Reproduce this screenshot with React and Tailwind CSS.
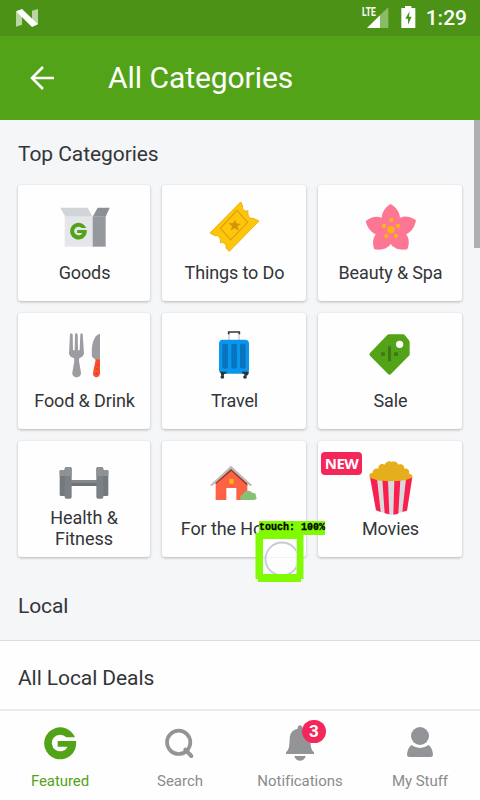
import React from "react";

const G_PATH =
  "M225 142A48 48 0 1 0 228 153H173V170H203A25 25 0 1 1 199 142Z";

const GoodsIcon = () => (
  <svg className="h-[77px] w-16 shrink-0" viewBox="126 30 192 231">
    <path fill="#d2d5d8" d="M151 98H233L248 125H166Z" />
    <path fill="#8c8f93" d="M263 98H299L287 125H248Z" />
    <path fill="#e4e6e9" d="M164 125H248V215H164Z" />
    <path fill="#95989c" d="M248 125H287V215H248Z" />
    <path fill="#53a318" transform="translate(111.5 85.3) scale(.52)" d={G_PATH} />
  </svg>
);

const TicketIcon = () => (
  <svg className="h-[77px] w-16 shrink-0" viewBox="141 30 192 231">
    <path
      fill="#fdc60b"
      stroke="#e9b10d"
      strokeWidth="3"
      strokeLinejoin="round"
      d="M257 81L263 93C259 103 271 112 279 107C277 120 281 132 294 130L312 138L223 229L213 219C216 208 204 199 196 204C198 190 191 179 180 182L165 174Z"
    />
    <path fill="none" stroke="#df9f11" strokeWidth="3.5" d="M246 106L278 142L227 195L196 160Z" />
    <path fill="#d3920f" d="M240 134L244 145L257 147L247 154L252 167L239 160L227 166L231 154L221 144L234 145Z" />
  </svg>
);

const FlowerIcon = () => (
  <svg className="h-[77px] w-16 shrink-0" viewBox="144 30 192 231">
    <path
      fill="#fd7795"
      d="M242 87C257 96 269 110 270 128C285 121 302 124 318 136C314 156 305 170 289 178C298 191 299 207 292 223C273 226 254 223 242 207C231 223 212 226 193 223C187 207 188 191 197 178C181 170 171 156 167 139C182 125 199 122 215 128C216 110 227 96 242 87Z"
    />
    <g fill="#fdb515">
      <circle cx="243" cy="164" r="11" />
      <circle cx="244" cy="135" r="6.5" />
      <circle cx="222" cy="153" r="6.5" />
      <circle cx="264" cy="153" r="6.5" />
      <circle cx="229" cy="183" r="6.5" />
      <circle cx="258" cy="183" r="6.5" />
    </g>
  </svg>
);

const FoodIcon = () => (
  <svg className="h-[77px] w-16 shrink-0" viewBox="126 24 192 231">
    <path
      fill="#9c9da1"
      d="M180 88Q184 82 188 88L189 136H194L195 88Q199 82 203 88L204 136H209L211 88Q215 82 218 88L222 146Q219 156 208 159L207 168L213 203C214 221 186 221 187 203L193 168L192 159Q180 157 177 146Z"
    />
    <path fill="#9c9da1" d="M270 86V164H256L246 155C243 124 249 90 270 86Z" />
    <path fill="#f6502d" d="M257 163H270V206C268 221 249 219 249 207C250 191 255 181 257 163Z" />
    <g fill="#c93e24">
      <circle cx="263" cy="179" r="2.5" />
      <circle cx="261" cy="192" r="2.5" />
      <circle cx="260" cy="206" r="2.5" />
    </g>
  </svg>
);

const TravelIcon = () => (
  <svg className="h-[77px] w-16 shrink-0" viewBox="141 24 192 231">
    <path fill="none" stroke="#b4b7ba" strokeWidth="3" d="M222 84V106M252 84V106" />
    <path fill="none" stroke="#35383b" strokeWidth="5" d="M221 88V81H253V88" />
    <rect x="192" y="104" width="90" height="102" rx="12" fill="#0a96ec" />
    <path fill="#0774bd" d="M202 119L207 116H214L219 119V187L214 191H207L202 187ZM229 119L234 116H241L246 119V187L241 191H234L229 187ZM255 119L260 116H267L272 119V187L267 191H260L255 187Z" />
    <path fill="#27343d" d="M195 200H215V204L207 208V212H198V206ZM261 200H281V206L276 212H268V208L261 204Z" />
    <circle cx="202" cy="216" r="5.5" fill="#27343d" />
    <circle cx="270" cy="216" r="5.5" fill="#27343d" />
  </svg>
);

const SaleIcon = () => (
  <svg className="h-[77px] w-16 shrink-0" viewBox="144 24 192 231">
    <path
      fill="#53a318"
      fillRule="evenodd"
      d="M237 88H279Q283 88 286 92L297 106Q299 109 299 113V150L243 207Q239 212 234 207L180 152Q176 148 180 144L231 91Q234 88 237 88ZM269 107A11 11 0 1 0 269 129A11 11 0 1 0 269 107Z"
    />
    <g fill="#3d7a12">
      <rect x="234" y="124" width="9" height="45" rx="2" />
      <rect x="213" y="142" width="12" height="11" rx="3" />
      <rect x="252" y="142" width="12" height="11" rx="3" />
    </g>
  </svg>
);

const HealthIcon = () => (
  <svg className="h-[66px] w-16 shrink-0" viewBox="126 18 192 198">
    <rect x="180" y="135" width="82" height="9" fill="#85898d" />
    <rect x="180" y="144" width="82" height="9" fill="#707477" />
    <rect x="149" y="105" width="20" height="78" rx="4" fill="#74797d" />
    <path fill="#8e9295" d="M153 105H166V123H149V109Q149 105 153 105Z" />
    <rect x="275" y="105" width="20" height="78" rx="4" fill="#74797d" />
    <path fill="#8e9295" d="M278 105H291Q295 105 295 109V123H278Z" />
    <rect x="164" y="96" width="21" height="95" rx="5" fill="#7b8184" />
    <path fill="#8e9295" d="M169 96H180Q185 96 185 101V123H164V101Q164 96 169 96Z" />
    <rect x="259" y="96" width="21" height="95" rx="5" fill="#7b8184" />
    <path fill="#8e9295" d="M264 96H275Q280 96 280 101V123H259V101Q259 96 264 96Z" />
  </svg>
);

const HomeIcon = () => (
  <svg className="h-[77px] w-16 shrink-0" viewBox="141 18 192 231">
    <path fill="#fb6344" d="M182 140L229 100L277 144V195H182Z" />
    <path fill="#9b3524" d="M182 138L229 98L277 142V152L229 108L182 148Z" />
    <path fill="#bdb9bb" d="M228 92L292 151L285 153L228 102L171 153L165 151Z" />
    <rect x="223" y="132" width="13" height="14" fill="#fdb515" />
    <rect x="214" y="159" width="30" height="37" fill="#fff" />
    <path
      fill="#86c176"
      d="M260 195C252 190 255 179 265 177C269 165 286 164 291 173C299 172 305 178 302 183C308 188 304 195 297 195Z"
    />
  </svg>
);

const MoviesIcon = () => (
  <svg className="h-[77px] w-16 shrink-0" viewBox="144 18 192 231">
    <path fill="#d9dadd" d="M180 126H307L291 228L241 240L199 226Z" />
    <path
      fill="#f9204f"
      d="M180 126L201 131L212 231L198 226ZM217 134L234 136L238 238L224 235ZM253 137L271 135L265 236L250 239ZM288 131L307 125L291 227L277 230Z"
    />
    <path
      fill="#e5ae1d"
      d="M180 128C175 119 181 113 188 114C187 104 198 98 206 102C202 91 215 84 224 89C227 80 238 76 245 81C255 77 264 83 264 89C275 85 285 92 282 101C292 98 301 107 297 116C305 117 310 123 306 129C296 130 291 136 278 136C267 140 254 137 247 138C236 141 226 137 216 137C205 138 193 133 180 128Z"
    />
  </svg>
);

const ROWS = [
  [
    { label: "Goods", Icon: GoodsIcon },
    { label: "Things to Do", Icon: TicketIcon },
    { label: "Beauty & Spa", Icon: FlowerIcon },
  ],
  [
    { label: "Food & Drink", Icon: FoodIcon },
    { label: "Travel", Icon: TravelIcon },
    { label: "Sale", Icon: SaleIcon },
  ],
  [
    { label: "Health & Fitness", Icon: HealthIcon, narrow: true },
    { label: "For the Home", Icon: HomeIcon, touch: true },
    { label: "Movies", Icon: MoviesIcon, isNew: true },
  ],
];

function TouchMarker() {
  return (
    <div className="absolute left-[93px] top-[80px] z-10 w-[71px]">
      <div className="absolute left-0 top-[12px] h-[49px] w-[49px]">
        <svg className="block h-full w-full" viewBox="0 0 49 49">
          <path fill="#80fb04" d="M0.5 0H48.5V46H46V49H3V46H0.5Z" />
          <rect x="8" y="6" width="33.5" height="35" fill="#f9f9fb" />
          <rect x="8" y="6" width="33.5" height="17" fill="#fff" />
          <path stroke="#dedee3" d="M8 24.5H41.5" />
          <svg x="8" y="6" width="33.5" height="35" viewBox="8 6 33.5 35">
            <circle cx="27" cy="26" r="16.5" fill="#ffffff" fillOpacity=".6" stroke="#c9c8de" strokeWidth="1.8" />
          </svg>
        </svg>
      </div>
      <div className="absolute left-[4px] top-0 h-[14px] w-[66px] whitespace-pre bg-[#80fb04] font-['Liberation_Mono',monospace] text-[10px] font-bold leading-[13px] text-black [-webkit-text-stroke:0.3px_black]">
        touch: 100%
      </div>
    </div>
  );
}

function Card({ label, Icon, narrow, touch, isNew }) {
  return (
    <div className="relative flex h-[116px] flex-col items-center rounded-[3px] bg-[#fefefe] shadow-[0_1px_3px_rgba(0,0,0,0.27)]">
      <Icon />
      <div
        className={
          narrow
            ? "w-[100px] text-center text-[18px] leading-[21px] tracking-[-0.05px]"
            : "whitespace-nowrap pl-px text-center text-[18px] leading-[21px] tracking-[-0.13px]"
        }
      >
        {label}
      </div>
      {isNew && (
        <span className="absolute left-[3px] top-[11px] flex h-[23px] w-[41px] items-center justify-center rounded-[4px] bg-[#f5265a] font-['Open_Sans',sans-serif] text-[15px] font-bold tracking-[-0.5px] text-white">
          NEW
        </span>
      )}
      {touch && <TouchMarker />}
    </div>
  );
}

function StatusBar() {
  return (
    <div className="flex h-9 items-center justify-between bg-[#4b9217] pl-4 pr-3">
      <svg className="h-[18px] w-[22px]" viewBox="48 27 66 54">
        <path fill="#b9d6a2" d="M48 35L66 44V74L48 80ZM96 32L114 27V73L96 66Z" />
        <path fill="#fff" d="M48 34L66 27L114 73L96 81Z" />
      </svg>
      <div className="flex items-center">
        <svg className="mb-[4px] h-6 w-[58px]" viewBox="62 12 174 72">
          <text
            x="65"
            y="49"
            fill="#fff"
            className="font-['Roboto',sans-serif] font-bold"
            fontSize="36"
            textLength="41"
            lengthAdjust="spacingAndGlyphs"
          >
            LTE
          </text>
          <path fill="#8abb65" d="M119 45L144 22V84H119Z" />
          <path fill="#fff" d="M80 84L119 46V84Z" />
          <path fill="#fff" d="M194 18H213V24H225V84H183V24H194Z" />
          <path fill="#4b9217" d="M208 34L195 56H203V74L214 50H206Z" />
        </svg>
        <span className="ml-[7px] mr-[1px] text-[21px] font-medium leading-9 text-white">1:29</span>
      </div>
    </div>
  );
}

function NavItem({ label, active, children }) {
  return (
    <div className="flex w-[120px] flex-col items-center">
      {children}
      <span
        className={
          active
            ? "text-[15px] leading-[18px] tracking-[-0.08px] text-[#53a318]"
            : "text-[15px] leading-[18px] tracking-[-0.04px] text-[#8b8b8b]"
        }
      >
        {label}
      </span>
    </div>
  );
}

export default function App() {
  return (
    <div className="flex h-[800px] w-[480px] flex-col overflow-hidden bg-[#f5f6f8] font-['Roboto',sans-serif] text-[#333538]">
      <StatusBar />
      <header className="flex h-[84px] shrink-0 items-center bg-[#53a318] pl-[30px]">
        <svg className="h-6 w-6" viewBox="0 0 24 24" fill="none" stroke="#fff" strokeWidth="2.6">
          <path d="M24 12H2M13 1L2 12L13 23" />
        </svg>
        <h1 className="ml-[54px] text-[30px] leading-9 tracking-[-0.05px] text-white">All Categories</h1>
      </header>

      <main className="relative flex min-h-0 flex-1 flex-col">
        <div className="absolute right-0 top-0 h-32 w-[6px] bg-[#b0b0b1]" />
        <h2 className="px-[18px] pb-[18px] pt-[21px] text-[21px] leading-[26px] tracking-[-0.07px]">Top Categories</h2>
        <div className="flex flex-col gap-3 px-[18px]">
          {ROWS.map((row) => (
            <div key={row[0].label} className="grid grid-cols-[132px_144px_144px] gap-3">
              {row.map((item) => (
                <Card key={item.label} {...item} />
              ))}
            </div>
          ))}
        </div>
        <h2 className="px-[18px] pb-[21px] pt-[36px] text-[21px] leading-[26px] tracking-[-0.1px]">Local</h2>
        <div className="flex-1 border-t border-[#dcdddf] bg-[#fefefe] px-[18px] pt-6 text-[21px] leading-[26px] tracking-[-0.08px]">
          All Local Deals
        </div>
      </main>

      <nav className="flex h-[91px] shrink-0 border-t-2 border-[#ececed] bg-[#fefefe]">
        <NavItem label="Featured" active>
          <svg className="h-[61px] w-12" viewBox="108 63 144 183">
            <path fill="#53a318" d={G_PATH} />
          </svg>
        </NavItem>
        <NavItem label="Search">
          <svg className="h-[61px] w-12" viewBox="468 63 144 183" fill="none" stroke="#929497">
            <circle cx="536" cy="157" r="35" strokeWidth="11" />
            <path d="M556 179L574 198" strokeWidth="12" strokeLinecap="round" />
          </svg>
        </NavItem>
        <NavItem label="Notifications">
          <div className="relative">
            <svg className="h-[61px] w-12" viewBox="828 63 144 183" fill="#929497">
              <path d="M893 116C891 102 909 102 907 116C922 119 930 129 931 145C932 171 933 180 942 187V192H858V187C867 180 868 171 869 145C870 129 878 119 893 116Z" />
              <path d="M883 198H917C914 217 886 217 883 198Z" />
            </svg>
            <span className="absolute left-[26px] top-[9px] flex h-[23px] w-[24px] items-center justify-center rounded-full bg-[#f5265a] text-[17px] font-bold leading-none text-white">
              3
            </span>
          </div>
        </NavItem>
        <NavItem label="My Stuff">
          <svg className="h-[61px] w-12" viewBox="1188 63 144 183" fill="#929497">
            <circle cx="1260" cy="138" r="27" />
            <path d="M1234 165Q1260 183 1286 165Q1297 174 1299 193Q1299 201 1292 201H1228Q1221 201 1221 193Q1223 174 1234 165Z" />
          </svg>
        </NavItem>
      </nav>
    </div>
  );
}
